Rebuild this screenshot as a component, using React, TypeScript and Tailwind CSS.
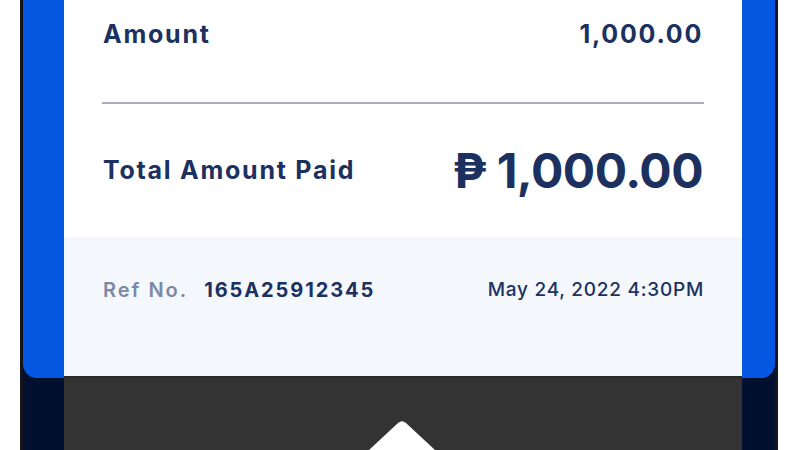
import React from "react";

export default function App() {
  const font = { fontFamily: "Inter, 'Noto Sans', sans-serif" };
  return (
    <div className="w-[800px] h-[450px] bg-white flex overflow-hidden" style={font}>
      <div className="w-[20px] shrink-0 bg-white" />
      <div className="w-[3px] shrink-0 bg-[#14161c]" />
      <div className="w-[752px] shrink-0 bg-[#01102e] flex flex-col">
        <div className="h-[378px] shrink-0 bg-[#0457e0] rounded-b-[14px] pl-[41px] pr-[33px] flex">
          <div className="flex-1 bg-white flex flex-col">
            <div className="h-[70px] shrink-0 pl-[39px] pr-[39px] flex items-center justify-between text-[#1c3160] text-[25px] font-bold tracking-[1.75px]">
              <span>Amount</span>
              <span>1,000.00</span>
            </div>
            <div className="mt-[32px] mx-[38px] h-[2px] bg-[#a8abc4]" />
            <div className="h-[133px] shrink-0 pl-[39px] pr-[39px] flex items-center justify-between text-[#1c3160]">
              <span className="text-[25px] font-bold tracking-[1.75px]">Total Amount Paid</span>
              <span className="text-[48px] font-bold leading-none tracking-[-0.5px] flex items-center gap-[10px]">
                <span>₱</span>
                <span>1,000.00</span>
              </span>
            </div>
            <div className="flex-1 bg-[#f4f7fc] border-b-2 border-[#2a2a2a] pl-[39px] pr-[38px] pt-[38px]">
              <div className="h-[30px] flex items-center justify-between">
                <div className="flex items-center gap-[16px] text-[20px]">
                  <span className="text-[#7c89a4] font-semibold tracking-[2px]">Ref No.</span>
                  <span className="text-[#1c3160] font-bold tracking-[1.9px]">165A25912345</span>
                </div>
                <span className="text-[#1c3160] text-[19px] font-medium tracking-[0.75px]">May 24, 2022 4:30PM</span>
              </div>
            </div>
          </div>
        </div>
        <div className="flex-1 flex pl-[41px] pr-[33px]">
          <div className="flex-1 bg-[#333333] flex justify-center items-end pr-[2px]">
            <svg width="66" height="30" viewBox="0 0 66 30" className="block">
              <path d="M0 30 L29 3 Q33 -0.5 37 3 L66 30 Z" fill="#ffffff" />
            </svg>
          </div>
        </div>
      </div>
      <div className="w-[3px] shrink-0 bg-[#14161c]" />
      <div className="flex-1 bg-white" />
    </div>
  );
}
